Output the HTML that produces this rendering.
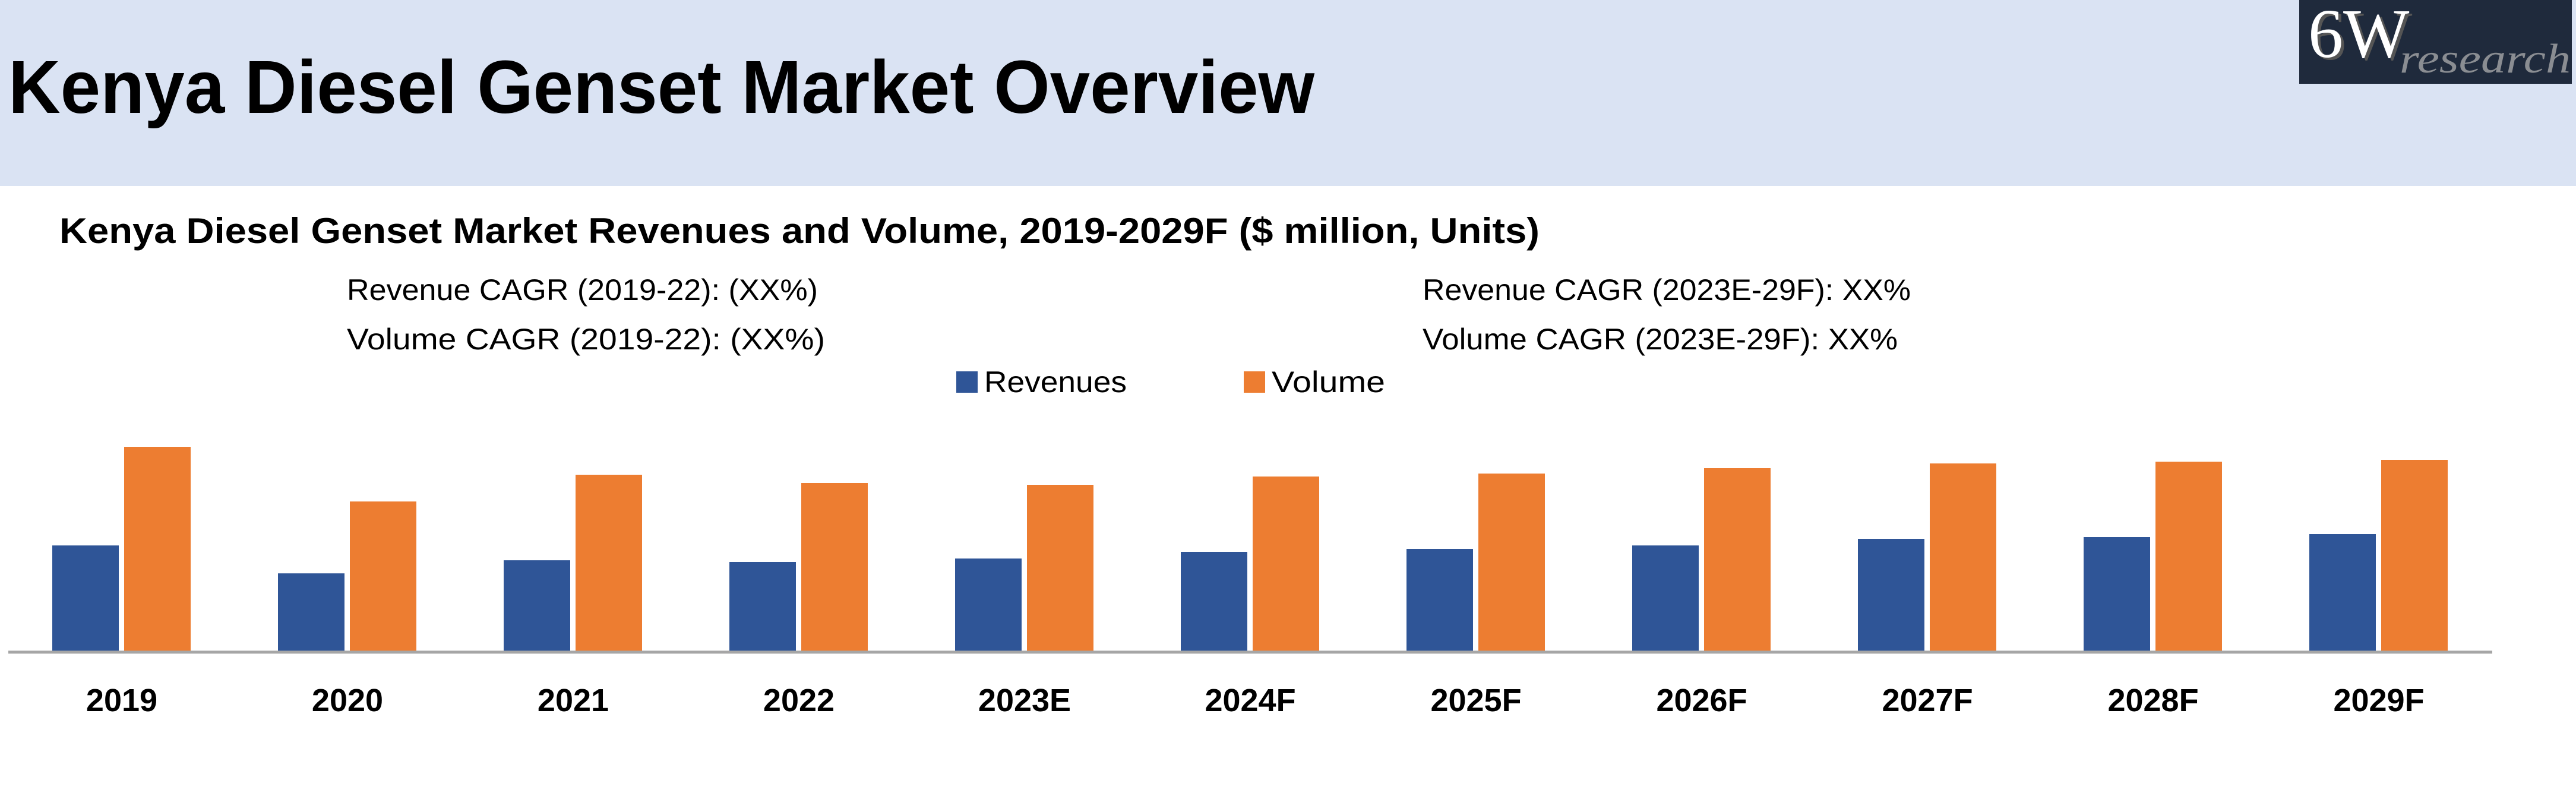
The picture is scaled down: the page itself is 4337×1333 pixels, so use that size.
<!DOCTYPE html>
<html><head><meta charset="utf-8"><style>
html,body{margin:0;padding:0;background:#fff;width:4337px;height:1333px;overflow:hidden}
svg{display:block}
</style></head><body>
<svg width="4337" height="1333" viewBox="0 0 4337 1333" xmlns="http://www.w3.org/2000/svg">
<rect x="0" y="0" width="4337" height="313" fill="#dae3f3"/>
<rect x="3871" y="0" width="459" height="141" fill="#1f2a3c"/>
<text x="3891" y="100" font-family="Liberation Serif, serif" font-size="118" fill="#555" >6W</text>
<text x="3886" y="96" font-family="Liberation Serif, serif" font-size="118" fill="#fff">6W</text>
<text x="4040" y="122" font-family="Liberation Serif, serif" font-style="italic" font-size="70" fill="#8a8d92" textLength="288" lengthAdjust="spacingAndGlyphs">research</text>
<text x="14" y="190" font-family="Liberation Sans, sans-serif" font-weight="bold" font-size="126" fill="#000" textLength="2199" lengthAdjust="spacingAndGlyphs">Kenya Diesel Genset Market Overview</text>
<text x="100" y="409" font-family="Liberation Sans, sans-serif" font-weight="bold" font-size="60" fill="#000" textLength="2492" lengthAdjust="spacingAndGlyphs">Kenya Diesel Genset Market Revenues and Volume, 2019-2029F ($ million, Units)</text>
<g font-family="Liberation Sans, sans-serif" font-size="50" fill="#000">
<text x="584" y="505" textLength="793" lengthAdjust="spacingAndGlyphs">Revenue CAGR (2019-22): (XX%)</text>
<text x="584" y="588" textLength="805" lengthAdjust="spacingAndGlyphs">Volume CAGR (2019-22): (XX%)</text>
<text x="2395" y="505" textLength="822" lengthAdjust="spacingAndGlyphs">Revenue CAGR (2023E-29F): XX%</text>
<text x="2395" y="588" textLength="800" lengthAdjust="spacingAndGlyphs">Volume CAGR (2023E-29F): XX%</text>
<text x="1657" y="660" textLength="240" lengthAdjust="spacingAndGlyphs">Revenues</text>
<text x="2141" y="660" textLength="191" lengthAdjust="spacingAndGlyphs">Volume</text>
</g>
<rect x="1610" y="625" width="36" height="36" fill="#2f5597"/>
<rect x="2094" y="625" width="36" height="36" fill="#ed7d31"/>
<g id="bars"></g>
<rect x="14" y="1095" width="4182" height="5" fill="#a6a6a6"/>
<g font-family="Liberation Sans, sans-serif" font-weight="bold" font-size="54" fill="#000" text-anchor="middle" id="labels"></g>
<script>
var b=[918,965,943,946,940,929,924,918,907,904,899];
var o=[752,844,799,813,816,802,797,788,780,777,774];
var L=["2019","2020","2021","2022","2023E","2024F","2025F","2026F","2027F","2028F","2029F"];
var ns="http://www.w3.org/2000/svg",g=document.getElementById("bars"),lg=document.getElementById("labels");
for(var i=0;i<11;i++){var x=88+380*i;
var r=document.createElementNS(ns,"rect");r.setAttribute("x",x);r.setAttribute("y",b[i]);r.setAttribute("width",112);r.setAttribute("height",1095-b[i]);r.setAttribute("fill","#2f5597");g.appendChild(r);
r=document.createElementNS(ns,"rect");r.setAttribute("x",x+121);r.setAttribute("y",o[i]);r.setAttribute("width",112);r.setAttribute("height",1095-o[i]);r.setAttribute("fill","#ed7d31");g.appendChild(r);
var t=document.createElementNS(ns,"text");t.setAttribute("x",x+117);t.setAttribute("y",1197);t.textContent=L[i];lg.appendChild(t);}
</script>
</svg>
</body></html>
